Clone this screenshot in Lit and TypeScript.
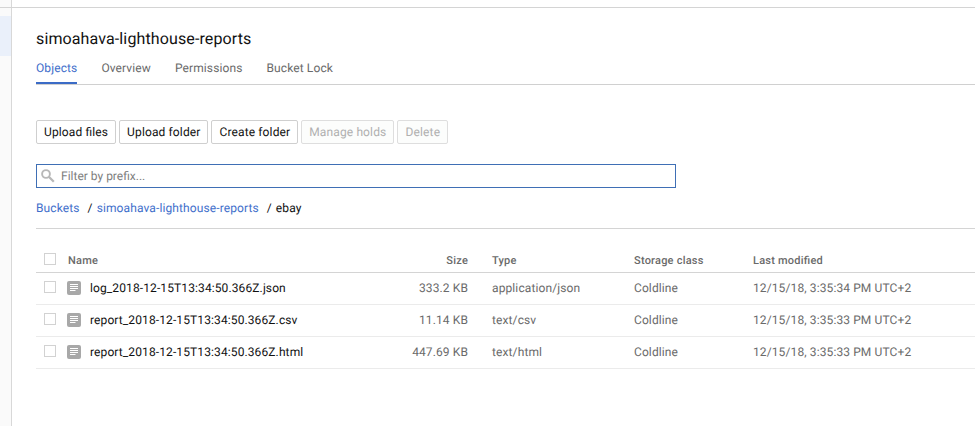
import { LitElement, html, css, svg } from "lit";
import { customElement } from "lit/decorators.js";

interface StoredObject {
  name: string;
  size: string;
  type: string;
  storage: string;
  modified: string;
}

const OBJECTS: StoredObject[] = [
  { name: "log_2018-12-15T13:34:50.366Z.json", size: "333.2 KB", type: "application/json", storage: "Coldline", modified: "12/15/18, 3:35:34 PM UTC+2" },
  { name: "report_2018-12-15T13:34:50.366Z.csv", size: "11.14 KB", type: "text/csv", storage: "Coldline", modified: "12/15/18, 3:35:33 PM UTC+2" },
  { name: "report_2018-12-15T13:34:50.366Z.html", size: "447.69 KB", type: "text/html", storage: "Coldline", modified: "12/15/18, 3:35:33 PM UTC+2" },
];

const docIcon = html`<svg class="doc" width="14" height="14" viewBox="0 0 14 14">
  ${svg`<rect width="14" height="14" rx="2" fill="#a8a8a8"/><path d="M3 3.5h8M3 5.5h8M3 7.5h8M3 9.5h5.5" stroke="#fff" stroke-width="1"/>`}
</svg>`;

const searchIcon = html`<svg width="14" height="14" viewBox="0 0 14 14">
  ${svg`<circle cx="5" cy="5" r="3.9" fill="none" stroke="#b8b8b8" stroke-width="1.9"/><path d="M7.8 7.8l5 5" stroke="#b8b8b8" stroke-width="2.3"/>`}
</svg>`;

@customElement("object-table")
export class ObjectTable extends LitElement {
  static styles = css`
    :host { display: block; color: #6a6a6a; }
    .row {
      display: grid;
      grid-template-columns: 24px 22px 286px 116px 142px 119px 1fr;
      height: 30px;
      padding-bottom: 1px;
      align-items: center;
      padding-left: 8px;
      border-bottom: 1px solid #ebebeb;
      line-height: 16px;
      white-space: nowrap;
    }
    .head {
      height: 23px;
      padding-top: 20px;
      padding-bottom: 0;
      font-size: 11px;
      font-weight: 500;
      letter-spacing: 0.22px;
      border-color: #d4d4d4;
    }
    .box {
      box-sizing: border-box;
      width: 12px;
      height: 12px;
      border: 1px solid #d2d2d2;
      background: #fff;
      margin-bottom: 2px;
    }
    .head .box { margin-bottom: 4px; }
    .doc { display: block; margin-left: -1px; }
    .name { color: #111; }
    .head .name { grid-column: 2 / 4; color: inherit; }
    .size { text-align: right; padding-right: 24px; }
  `;

  render() {
    return html`
      <div class="row head">
        <span class="box"></span><span class="name">Name</span><span class="size">Size</span>
        <span>Type</span><span>Storage class</span><span>Last modified</span>
      </div>
      ${OBJECTS.map((o) => html`
        <div class="row">
          <span class="box"></span>${docIcon}<span class="name">${o.name}</span>
          <span class="size">${o.size}</span><span>${o.type}</span>
          <span>${o.storage}</span><span>${o.modified}</span>
        </div>`)}
    `;
  }
}

@customElement("app-root")
export class AppRoot extends LitElement {
  static styles = css`
    :host {
      display: flex;
      flex-direction: column;
      height: 426px;
      overflow: hidden;
      background: #fff;
      font: 12px/16px Roboto, sans-serif;
      letter-spacing: 0.11px;
      font-feature-settings: "liga" 1;
      text-rendering: geometricPrecision;
      color: #111;
    }
    .top { display: flex; height: 7px; border-bottom: 1px solid #d4d4d4; flex: none; }
    .rail { width: 11px; border-right: 1px solid #d8d8d8; background: #fafafa; flex: none; }
    .body { display: flex; flex: 1; }
    .active { margin-top: 8px; height: 40px; background: #eaf0fa; }
    main { flex: 1; padding-left: 24px; min-width: 0; }
    h1 { margin: 20px 0 0; font-size: 16px; line-height: 22px; font-weight: 400; letter-spacing: 0.12px; }
    nav { display: flex; gap: 24px; margin-top: 10px; height: 24px; border-bottom: 1px solid #d0d0d0; color: #6a6a6a; }
    .tab { height: 22px; }
    .current { color: #3f6fcb; border-bottom: 2px solid #3b6bc6; }
    .actions { display: flex; gap: 3px; margin-top: 35px; }
    button {
      box-sizing: border-box;
      height: 24px;
      padding: 0 7px;
      border: 1px solid #cfcfcf;
      border-radius: 2px;
      background: #fff;
      color: #111;
      font: inherit;
      font-feature-settings: inherit;
      letter-spacing: 0.13px;
      text-rendering: inherit;
    }
    button:disabled { border-color: #dedede; background: #fcfdfc; color: #b0b0b0; }
    button:last-child { width: 51px; }
    .filter {
      box-sizing: border-box;
      display: flex;
      align-items: center;
      gap: 6px;
      width: 640px;
      height: 24px;
      margin-top: 20px;
      padding-left: 4px;
      border: 1px solid #3f6fb5;
      color: #808080;
      letter-spacing: 0;
    }
    .crumbs { display: flex; margin-top: 12px; padding-bottom: 12px; border-bottom: 1px solid #d4d4d4; white-space: pre; }
    .link { color: #3f6fcb; }
    .sep { padding: 0 4px 0 8px; }
  `;

  render() {
    return html`
      <div class="top"><div class="rail"></div></div>
      <div class="body">
        <div class="rail"><div class="active"></div></div>
        <main>
          <h1>simoahava-lighthouse-reports</h1>
          <nav>
            <span class="tab current">Objects</span><span class="tab">Overview</span>
            <span class="tab">Permissions</span><span class="tab">Bucket Lock</span>
          </nav>
          <div class="actions">
            <button>Upload files</button><button>Upload folder</button><button>Create folder</button>
            <button disabled>Manage holds</button><button disabled>Delete</button>
          </div>
          <div class="filter">${searchIcon}<span>Filter by prefix...</span></div>
          <div class="crumbs"><span class="link">Buckets</span><span class="sep">/</span><span class="link">simoahava-lighthouse-reports</span><span class="sep">/</span><span>ebay</span></div>
          <object-table></object-table>
        </main>
      </div>
    `;
  }
}
